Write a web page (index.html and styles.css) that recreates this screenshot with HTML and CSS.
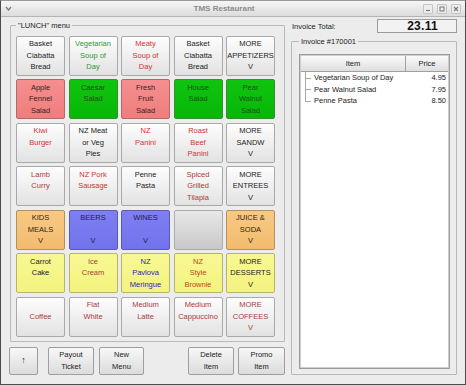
FILE: index.html
```html
<!DOCTYPE html>
<html>
<head>
<meta charset="utf-8">
<link rel="stylesheet" href="styles.css">
</head>
<body>
<div class="window">
  <div class="titlebar">
    <div class="tb-menu"><svg width="9" height="9" viewBox="0 0 9 9"><path d="M2 3 L4.5 6 L7 3" fill="none" stroke="#777" stroke-width="1.2"/></svg></div>
    <div class="tb-title">TMS Restaurant</div>
    <div class="tb-btns">
      <span class="tb-btn"><svg width="8" height="8" viewBox="0 0 8 8"><path d="M2 5.5 H6" stroke="#777" stroke-width="1.2"/></svg></span>
      <span class="tb-btn"><svg width="8" height="8" viewBox="0 0 8 8"><rect x="2" y="2" width="4" height="4" fill="none" stroke="#777" stroke-width="1"/></svg></span>
      <span class="tb-btn"><svg width="8" height="8" viewBox="0 0 8 8"><path d="M2 2 L6 6 M6 2 L2 6" stroke="#777" stroke-width="1.1"/></svg></span>
    </div>
  </div>
  <div class="main">
    <div class="left">
      <fieldset class="group menu-group">
        <legend>"LUNCH" menu</legend>
        <div class="grid">
          <button class="btn">Basket<br>Ciabatta<br>Bread</button>
          <button class="btn t-green">Vegetarian<br>Soup of<br>Day</button>
          <button class="btn t-red">Meaty<br>Soup of<br>Day</button>
          <button class="btn">Basket<br>Ciabatta<br>Bread</button>
          <button class="btn">MORE<br>APPETIZERS<br>V</button>

          <button class="btn b-red">Apple<br>Fennel<br>Salad</button>
          <button class="btn b-green">Caesar<br>Salad<br>&nbsp;</button>
          <button class="btn b-red">Fresh<br>Fruit<br>Salad</button>
          <button class="btn b-green">House<br>Salad<br>&nbsp;</button>
          <button class="btn b-green">Pear<br>Walnut<br>Salad</button>

          <button class="btn t-red">Kiwi<br>Burger<br>&nbsp;</button>
          <button class="btn">NZ Meat<br>or Veg<br>Pies</button>
          <button class="btn t-red">NZ<br>Panini<br>&nbsp;</button>
          <button class="btn t-red">Roast<br>Beef<br>Panini</button>
          <button class="btn">MORE<br>SANDW<br>V</button>

          <button class="btn t-brick">Lamb<br>Curry<br>&nbsp;</button>
          <button class="btn t-red">NZ Pork<br>Sausage<br>&nbsp;</button>
          <button class="btn">Penne<br>Pasta<br>&nbsp;</button>
          <button class="btn t-brick">Spiced<br>Grilled<br>Tilapia</button>
          <button class="btn">MORE<br>ENTREES<br>V</button>

          <button class="btn b-orange">KIDS<br>MEALS<br>V</button>
          <button class="btn b-blue">BEERS<br>&nbsp;<br>V</button>
          <button class="btn b-blue">WINES<br>&nbsp;<br>V</button>
          <button class="btn b-empty"></button>
          <button class="btn b-orange">JUICE &amp;<br>SODA<br>V</button>

          <button class="btn b-yellow">Carrot<br>Cake<br>&nbsp;</button>
          <button class="btn b-yellow t-brick">Ice<br>Cream<br>&nbsp;</button>
          <button class="btn b-yellow t-blue">NZ<br>Pavlova<br>Meringue</button>
          <button class="btn b-yellow t-rust">NZ<br>Style<br>Brownie</button>
          <button class="btn b-yellow">MORE<br>DESSERTS<br>V</button>

          <button class="btn t-brick">Coffee</button>
          <button class="btn t-brick">Flat<br>White<br>&nbsp;</button>
          <button class="btn t-brick">Medium<br>Latte<br>&nbsp;</button>
          <button class="btn t-brick">Medium<br>Cappuccino<br>&nbsp;</button>
          <button class="btn t-brick">MORE<br>COFFEES<br>V</button>
        </div>
      </fieldset>
      <div class="actions">
        <button class="btn act act-up">↑</button>
        <button class="btn act act-payout">Payout<br>Ticket</button>
        <button class="btn act act-new">New<br>Menu</button>
        <button class="btn act act-delete">Delete<br>Item</button>
        <button class="btn act act-promo">Promo<br>Item</button>
      </div>
    </div>
    <div class="right">
      <div class="total-row">
        <span class="total-label">Invoice Total:</span>
        <span class="lcd">23.11</span>
      </div>
      <fieldset class="group invoice-group">
        <legend>Invoice #170001</legend>
        <div class="table">
          <div class="thead">
            <div class="th th-item">Item</div>
            <div class="th th-price">Price</div>
          </div>
          <div class="tbody">
            <div class="row"><span class="name">Vegetarian Soup of Day</span><span class="price">4.95</span></div>
            <div class="row"><span class="name">Pear Walnut Salad</span><span class="price">7.95</span></div>
            <div class="row last"><span class="name">Penne Pasta</span><span class="price">8.50</span></div>
          </div>
        </div>
      </fieldset>
    </div>
  </div>
</div>
</body>
</html>
```

FILE: styles.css
```css
html, body {
  margin: 0;
  padding: 0;
}
body {
  width: 466px;
  height: 385px;
  overflow: hidden;
  font-family: "Liberation Sans", Arial, sans-serif;
  font-size: 7.5px;
  color: #222;
  background: #ececec;
}
.window {
  box-sizing: border-box;
  width: 466px;
  height: 385px;
  border: 1px solid #4c4c4c;
  border-top-color: #9a9a9a;
  background: #ececec;
  display: flex;
  flex-direction: column;
}
.titlebar {
  height: 16px;
  flex: 0 0 16px;
  box-sizing: border-box;
  border-bottom: 1px solid #b4b4b4;
  background: linear-gradient(#f6f6f6, #dcdcdc);
  display: flex;
  align-items: center;
  position: relative;
}
.tb-menu {
  width: 9px;
  height: 9px;
  margin-left: 3px;
  display: flex;
}
.tb-title {
  flex: 1;
  text-align: center;
  font-weight: bold;
  font-size: 8px;
  color: #8c8c8c;
  padding-left: 12px;
  margin-right: 0;
}
.tb-btns {
  display: flex;
  gap: 4px;
  margin-right: 4px;
}
.tb-btn {
  width: 8px;
  height: 8px;
  border: 1px solid #c4c4c4;
  border-radius: 1px;
  background: #ededed;
  display: flex;
}
.main {
  flex: 1;
  display: flex;
  min-height: 0;
}
.left {
  width: 287px;
  flex: 0 0 287px;
  display: flex;
  flex-direction: column;
}
.right {
  flex: 1;
  display: flex;
  flex-direction: column;
  min-width: 0;
}
.group {
  margin: 0;
  border: 1px solid #b9b9b9;
  border-radius: 1px;
  min-width: 0;
}
.group legend {
  padding: 0 2px;
  line-height: 9px;
  font-size: 7.5px;
  color: #222;
}
.menu-group {
  margin: 3.5px 0 0 9px;
  width: 275px;
  box-sizing: border-box;
  padding: 6px 7px 4px 5px;
}
.grid {
  display: grid;
  grid-template-columns: repeat(5, 49px);
  grid-auto-rows: 40px;
  column-gap: 3.5px;
  row-gap: 3.5px;
}
.btn {
  font-family: inherit;
  font-size: 7.5px;
  line-height: 11.5px;
  color: #222;
  margin: 0;
  padding: 0;
  border: 1px solid #a9a9a9;
  border-radius: 2px;
  background: linear-gradient(#fdfdfd, #e2e2e2);
  display: flex;
  flex-direction: column;
  align-items: center;
  justify-content: center;
  text-align: center;
  box-sizing: border-box;
  overflow: hidden;
}
.t-green { color: #2f9a34; }
.t-red { color: #d43232; }
.t-brick { color: #ad3b3b; }
.t-blue { color: #2727b4; }
.t-rust { color: #c0461c; }
.b-red {
  background: linear-gradient(#f58f8f, #ef7d7d);
  border-color: #b06a6a;
  color: #3a2222;
}
.b-green {
  background: linear-gradient(#0fc40f, #07b807);
  border-color: #3a8a3a;
  color: #1f4d1f;
}
.b-orange {
  background: linear-gradient(#f8c985, #f2bb6e);
  border-color: #b49060;
  color: #2e2415;
}
.b-blue {
  background: linear-gradient(#7f7ff2, #7272ec);
  border-color: #5c5cae;
  color: #1e1e3c;
}
.b-yellow {
  background: linear-gradient(#f8f894, #f3f37f);
  border-color: #b5b56a;
}
.b-empty {
  background: linear-gradient(#e8e8e8, #c8c8c8);
  border-color: #ababab;
}
.actions {
  display: flex;
  align-items: flex-start;
  margin-top: 5px;
  padding-left: 8px;
}
.act {
  height: 28px;
  border-color: #9e9e9e;
  background: linear-gradient(#f7f7f7, #dcdcdc);
}
.act-up { width: 29px; font-size: 9px; }
.act-payout { width: 46px; margin-left: 10px; }
.act-new { width: 45px; margin-left: 5px; }
.act-delete { width: 46px; margin-left: 44px; }
.act-promo { width: 47px; margin-left: 4px; }
.total-row {
  display: flex;
  align-items: center;
  margin-top: 2px;
  height: 14px;
  padding-left: 4px;
  padding-right: 8px;
}
.total-label {
  flex: 1;
  color: #222;
}
.lcd {
  width: 80px;
  height: 14px;
  box-sizing: border-box;
  border: 1px solid #9c9c9c;
  background: #f2f2f2;
  font-size: 12px;
  font-weight: bold;
  line-height: 12px;
  color: #111;
  text-align: right;
  padding-right: 18px;
  letter-spacing: 0.3px;
}
.invoice-group {
  flex: 1;
  margin: 4px 8px 9px 3px;
  padding: 8px 6px 5px 7px;
  display: flex;
  flex-direction: column;
}
.table {
  flex: 1;
  border: 1px solid #9a9a9a;
  box-shadow: inset 0 0 0 1px #cfcfcf;
  background: #fff;
  display: flex;
  flex-direction: column;
}
.thead {
  display: flex;
  height: 16px;
  box-sizing: border-box;
  border-bottom: 1px solid #a0a0a0;
  background: linear-gradient(#fafafa, #dedede);
  margin: 1px 1px 0 1px;
}
.th {
  display: flex;
  align-items: center;
  justify-content: center;
  color: #222;
}
.th-item {
  width: 104px;
  border-right: 1px solid #a0a0a0;
}
.th-price {
  flex: 1;
}
.tbody {
  flex: 1;
  padding-top: 0;
}
.row {
  position: relative;
  display: flex;
  height: 11.5px;
  align-items: center;
  padding-left: 14px;
  padding-right: 3px;
}
.row::before {
  content: "";
  position: absolute;
  left: 5px;
  top: 0;
  bottom: 0;
  border-left: 1px solid #a8a8a8;
}
.row.last::before {
  bottom: 50%;
}
.row::after {
  content: "";
  position: absolute;
  left: 5px;
  width: 6px;
  top: 50%;
  border-top: 1px solid #a8a8a8;
}
.name {
  flex: 1;
  color: #222;
}
.price {
  color: #222;
}
```
